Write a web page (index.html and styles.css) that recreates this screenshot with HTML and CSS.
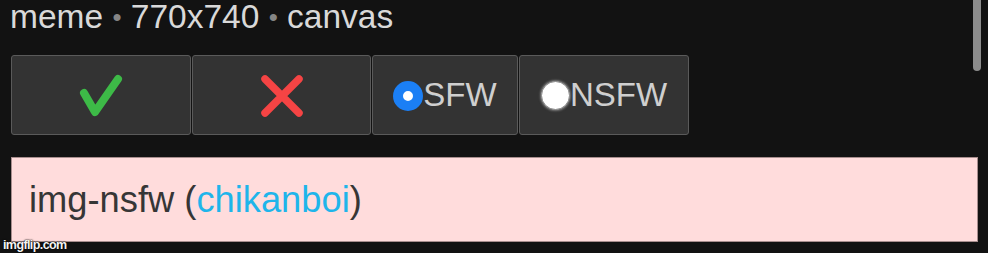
FILE: index.html
```html
<!DOCTYPE html>
<html>
<head>
<meta charset="utf-8">
<link rel="stylesheet" href="styles.css">
</head>
<body>
<div class="page">
  <div class="meta">meme <span class="dot">•</span> 770x740 <span class="dot">•</span> canvas</div>
  <div class="actions">
    <div class="btn btn-approve">
      <svg class="icon" width="44" height="44" viewBox="0 0 44 44"><path d="M5 19 L16 38 L39 5" fill="none" stroke="#3dba47" stroke-width="8" stroke-linecap="round" stroke-linejoin="round"/></svg>
    </div>
    <div class="btn btn-reject">
      <svg class="icon" width="44" height="44" viewBox="0 0 44 44"><path d="M5 5 L39 39 M39 5 L5 39" fill="none" stroke="#f54444" stroke-width="7.5" stroke-linecap="round"/></svg>
    </div>
    <div class="btn btn-sfw"><span class="radio radio-on"></span><span class="label">SFW</span></div>
    <div class="btn btn-nsfw"><span class="radio radio-off"></span><span class="label">NSFW</span></div>
  </div>
  <div class="notice">img-nsfw (<span class="user">chikanboi</span>)</div>
  <div class="scrollbar"></div>
  <div class="watermark">imgflip.com</div>
</div>
</body>
</html>
```
FILE: styles.css
```css
html, body {
  margin: 0;
  padding: 0;
  background: #121212;
}
.page {
  position: relative;
  width: 988px;
  height: 253px;
  overflow: hidden;
  font-family: "Liberation Sans", Arial, sans-serif;
}
.meta {
  height: 33px;
  line-height: 33px;
  font-size: 33.5px;
  color: #d9d9d9;
  padding-left: 10px;
  white-space: nowrap;
}
.dot {
  color: #858585;
  font-size: 26px;
  vertical-align: 2px;
}
.actions {
  display: flex;
  gap: 1px;
  margin: 22px 0 0 11px;
  height: 80px;
}
.btn {
  box-sizing: border-box;
  height: 80px;
  background: #333333;
  border: 1px solid #5a5a5a;
  border-radius: 3px;
  display: flex;
  align-items: center;
  justify-content: center;
}
.btn-approve { width: 180px; }
.btn-reject { width: 179px; }
.btn-sfw { width: 146px; }
.btn-nsfw { width: 170px; }
.icon { display: block; margin-top: 2px; }
.label {
  font-size: 33px;
  color: #cfcfcf;
  line-height: 34px;
}
.radio {
  box-sizing: border-box;
  width: 30px;
  height: 30px;
  border-radius: 50%;
  flex: none;
  margin-top: 1px;
}
.radio-on {
  background: #ffffff;
  border: 10px solid #1b7ff5;
}
.radio-off {
  width: 29px;
  height: 29px;
  background: #ffffff;
  border: 1.5px solid #8a8a8a;
  box-shadow: 0 0 2px 1px #777;
}
.notice {
  box-sizing: border-box;
  margin: 22px 10px 0 11px;
  height: 85px;
  background: #ffdcdc;
  border: 1px solid #a88e8e;
  padding: 22px 0 0 17px;
  font-size: 36.3px;
  line-height: 40px;
  color: #363636;
}
.user { color: #1fb5ea; }
.scrollbar {
  position: absolute;
  top: -6px;
  right: 7px;
  width: 8px;
  height: 77px;
  border-radius: 4px;
  background: #8c8c8c;
}
.watermark {
  position: absolute;
  left: 3px;
  top: 238px;
  font-size: 12.5px;
  font-weight: bold;
  line-height: 14px;
  letter-spacing: -0.6px;
  color: #f4f4f4;
  text-shadow: 0 0 2px #000, 0 0 1px #000;
}
```
